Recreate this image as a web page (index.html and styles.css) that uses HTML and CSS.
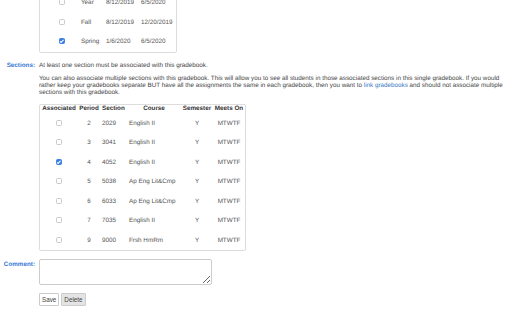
FILE: index.html
```html
<!DOCTYPE html>
<html lang="en">
<head>
    <meta charset="UTF-8">
    <meta name="viewport" content="width=device-width, initial-scale=1.0">
    <title>Gradebook Settings</title>
    <link rel="stylesheet" href="styles.css">
</head>
<body>

    <div class="form">

        <!-- terms (scrolled, only bottom visible) -->
        <div class="label"></div>
        <div class="field">
            <div class="box terms">
                <table>
                    <colgroup>
                        <col class="t-chk"><col class="t-name"><col class="t-start"><col class="t-end">
                    </colgroup>
                    <tr>
                        <td class="chk"><input type="checkbox"></td>
                        <td>Year</td>
                        <td>8/12/2019</td>
                        <td>6/5/2020</td>
                    </tr>
                    <tr>
                        <td class="chk"><input type="checkbox"></td>
                        <td>Fall</td>
                        <td>8/12/2019</td>
                        <td>12/20/2019</td>
                    </tr>
                    <tr>
                        <td class="chk"><input type="checkbox" checked></td>
                        <td>Spring</td>
                        <td>1/6/2020</td>
                        <td>6/5/2020</td>
                    </tr>
                </table>
            </div>
        </div>

        <!-- sections -->
        <div class="label">Sections:</div>
        <div class="field">
            <div class="note">At least one section must be associated with this gradebook.</div>
            <p class="help">
                You can also associate multiple sections with this gradebook. This will allow you to see all students in those associated sections in this single gradebook. If you would rather keep your gradebooks separate BUT have all the assignments the same in each gradebook, then you want to <a href="#">link gradebooks</a> and should not associate multiple sections with this gradebook.
            </p>
            <div class="box sections">
                <table>
                    <colgroup>
                        <col class="c-assoc"><col class="c-period"><col class="c-section">
                        <col class="c-course"><col class="c-sem"><col class="c-meets">
                    </colgroup>
                    <tr>
                        <th>Associated</th>
                        <th>Period</th>
                        <th class="left">Section</th>
                        <th>Course</th>
                        <th>Semester</th>
                        <th>Meets On</th>
                    </tr>
                    <tr>
                        <td class="chk"><input type="checkbox"></td>
                        <td class="mid">2</td><td>2029</td><td>English II</td>
                        <td class="mid">Y</td><td class="mid">MTWTF</td>
                    </tr>
                    <tr>
                        <td class="chk"><input type="checkbox"></td>
                        <td class="mid">3</td><td>3041</td><td>English II</td>
                        <td class="mid">Y</td><td class="mid">MTWTF</td>
                    </tr>
                    <tr>
                        <td class="chk"><input type="checkbox" checked></td>
                        <td class="mid">4</td><td>4052</td><td>English II</td>
                        <td class="mid">Y</td><td class="mid">MTWTF</td>
                    </tr>
                    <tr>
                        <td class="chk"><input type="checkbox"></td>
                        <td class="mid">5</td><td>5038</td><td>Ap Eng Lit&amp;Cmp</td>
                        <td class="mid">Y</td><td class="mid">MTWTF</td>
                    </tr>
                    <tr>
                        <td class="chk"><input type="checkbox"></td>
                        <td class="mid">6</td><td>6033</td><td>Ap Eng Lit&amp;Cmp</td>
                        <td class="mid">Y</td><td class="mid">MTWTF</td>
                    </tr>
                    <tr>
                        <td class="chk"><input type="checkbox"></td>
                        <td class="mid">7</td><td>7035</td><td>English II</td>
                        <td class="mid">Y</td><td class="mid">MTWTF</td>
                    </tr>
                    <tr>
                        <td class="chk"><input type="checkbox"></td>
                        <td class="mid">9</td><td>9000</td><td>Frsh HmRm</td>
                        <td class="mid">Y</td><td class="mid">MTWTF</td>
                    </tr>
                </table>
            </div>
        </div>

        <!-- comment -->
        <div class="label comment-label">Comment:</div>
        <div class="field comment-field">
            <textarea class="comment"></textarea>
        </div>

        <!-- buttons -->
        <div class="label"></div>
        <div class="field buttons">
            <button class="btn">Save</button>
            <button class="btn btn-gray">Delete</button>
        </div>

    </div>

</body>
</html>
```

FILE: styles.css
```css
/* base */
body {
    margin: 0;
    font-family: "Liberation Sans", Arial, sans-serif;
    font-size: 6.3px;
    line-height: 7.2px;
    color: #444;
    background-color: #fff;
    text-rendering: geometricPrecision;
}

/* form grid: label column + field column */
.form {
    display: grid;
    grid-template-columns: 35px 1fr;
    column-gap: 4px;
    padding-right: 3px;
}
.label {
    text-align: right;
    font-weight: bold;
    color: #3577d4;
}
.field {
    min-width: 0;
}

/* boxes round the tables */
.box {
    display: inline-block;
    border: 1px solid #ddd;
    border-radius: 2px;
    box-shadow: 0 0 1px rgba(0, 0, 0, 0.06);
    background-color: #fff;
}
table {
    border-collapse: collapse;
    table-layout: fixed;
}
td, th {
    padding: 0 0 0 3px;
    text-align: left;
    white-space: nowrap;
    overflow: visible;
}
td {
    height: 19.5px;
    color: #555;
}
td.chk {
    text-align: center;
    padding: 0;
}
.mid, th {
    text-align: center;
}
th {
    height: 9px;
    padding: 0;
    color: #333;
}
th.left {
    text-align: left;
    padding-left: 2px;
}

/* term table, scrolled so the first row is cut */
.terms {
    margin-top: -8px;
    margin-bottom: 7px;
}
.terms table {
    width: 136px;
}
.terms td.chk {
    padding-left: 6px;
}
.t-chk { width: 38px; }
.t-name { width: 25px; }
.t-start { width: 35px; }
.t-end { width: 38px; }

/* section table */
.sections table {
    width: 205px;
}
.sections td {
    padding-left: 2px;
}
.sections td.chk,
.sections td.mid {
    padding: 0;
}
.c-assoc { width: 38px; }
.c-period { width: 22px; }
.c-section { width: 27px; }
.c-course { width: 54px; }
.c-sem { width: 32px; }
.c-meets { width: 32px; }

/* checkboxes */
input[type="checkbox"] {
    appearance: none;
    -webkit-appearance: none;
    display: inline-grid;
    place-content: center;
    box-sizing: border-box;
    width: 6px;
    height: 6px;
    margin: 0;
    vertical-align: middle;
    border: 1px solid #c9c9c9;
    border-radius: 1.5px;
    background-color: #fff;
}
input[type="checkbox"]:checked {
    background-color: #3b7fe4;
    border-color: #3b7fe4;
}
input[type="checkbox"]:checked::before {
    content: "";
    width: 1px;
    height: 2.5px;
    margin-top: -1px;
    border-right: 1px solid #fff;
    border-bottom: 1px solid #fff;
    transform: rotate(45deg);
}

/* texts */
.help {
    margin: 6px 0 7px 0;
}
.help a {
    color: #3a78c2;
    text-decoration: none;
}

/* comment */
.comment-label,
.comment-field {
    margin-top: 6px;
}
.comment-label {
    padding-top: 2px;
}
.comment {
    display: block;
    box-sizing: border-box;
    width: 173px;
    height: 26px;
    margin: 0;
    border: 1px solid #ccc;
    border-radius: 2px;
    font: inherit;
}

/* buttons */
.buttons {
    display: flex;
    gap: 2px;
    margin-top: 8px;
}
.btn {
    height: 13px;
    padding: 0 2px;
    font-family: inherit;
    font-size: 6.3px;
    color: #444;
    background-color: #fff;
    border: 1px solid #ccc;
    border-radius: 1px;
}
.btn-gray {
    background-color: #e4e4e4;
}
```
